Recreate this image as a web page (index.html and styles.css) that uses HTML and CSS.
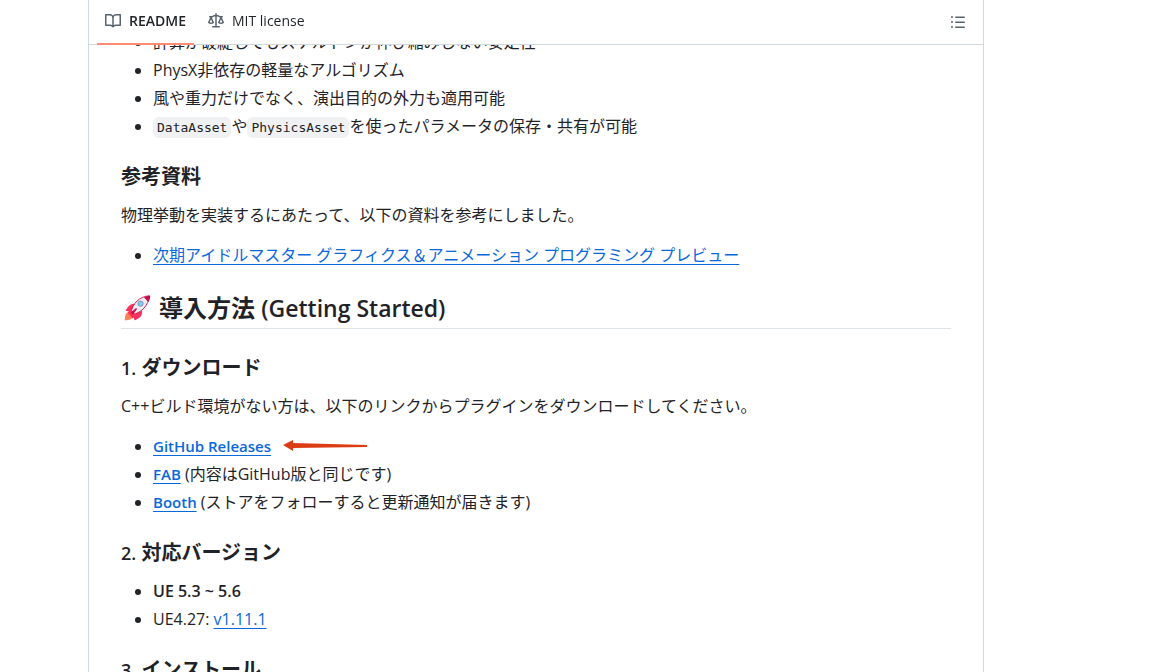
FILE: index.html
```html
<!DOCTYPE html>
<html lang="ja">
<head>
<meta charset="utf-8">
<meta name="viewport" content="width=device-width, initial-scale=1">
<title>README</title>
<link rel="stylesheet" href="styles.css">
</head>
<body>
<main class="panel">
  <header class="panel-bar">
    <nav class="tabs">
      <a class="tab tab-active" href="#readme">
        <svg class="icon" viewBox="0 0 16 16" aria-hidden="true"><path d="M0 1.75A.75.75 0 0 1 .75 1h4.253c1.227 0 2.317.59 3 1.501A3.743 3.743 0 0 1 11.006 1h4.245a.75.75 0 0 1 .75.75v10.5a.75.75 0 0 1-.75.75h-4.507a2.25 2.25 0 0 0-1.591.659l-.622.621a.75.75 0 0 1-1.06 0l-.622-.621A2.25 2.25 0 0 0 5.258 13H.75a.75.75 0 0 1-.75-.75Zm7.251 10.324.004-5.073-.002-2.253A2.25 2.25 0 0 0 5.003 2.5H1.5v9h3.757a3.75 3.75 0 0 1 1.994.574ZM8.755 4.75l-.004 7.322a3.752 3.752 0 0 1 1.992-.572H14.5v-9h-3.495a2.25 2.25 0 0 0-2.25 2.25Z"/></svg>
        <span>README</span>
      </a>
      <a class="tab" href="#license">
        <svg class="icon" viewBox="0 0 16 16" aria-hidden="true"><path d="M8.75.75V2h.985c.304 0 .603.08.867.231l1.29.736c.038.022.08.033.124.033h2.234a.75.75 0 0 1 0 1.5h-.427l2.111 4.692a.75.75 0 0 1-.154.838l-.53-.53.529.531-.001.002-.002.002-.006.006-.006.005-.01.01-.045.04c-.21.176-.441.327-.686.45C14.556 10.78 13.88 11 13 11a4.498 4.498 0 0 1-2.023-.454 3.544 3.544 0 0 1-.686-.45l-.045-.04-.016-.015-.006-.006-.004-.004v-.001a.75.75 0 0 1-.154-.838L12.178 4.5h-.162c-.305 0-.604-.079-.868-.231l-1.29-.736a.245.245 0 0 0-.124-.033H8.75V13h2.5a.75.75 0 0 1 0 1.5h-6.5a.75.75 0 0 1 0-1.5h2.5V3.5h-.984a.245.245 0 0 0-.124.033l-1.289.737c-.265.15-.564.23-.869.23h-.162l2.112 4.692a.75.75 0 0 1-.154.838l-.53-.53.529.531-.001.002-.002.002-.006.006-.016.015-.045.04c-.21.176-.441.327-.686.45C4.556 10.78 3.88 11 3 11a4.498 4.498 0 0 1-2.023-.454 3.544 3.544 0 0 1-.686-.45l-.045-.04-.016-.015-.006-.006-.004-.004v-.001a.75.75 0 0 1-.154-.838L2.178 4.5H1.75a.75.75 0 0 1 0-1.5h2.234a.249.249 0 0 0 .125-.033l1.288-.737c.265-.15.564-.23.869-.23h.984V.75a.75.75 0 0 1 1.5 0Zm2.945 8.477c.285.135.718.273 1.305.273s1.02-.138 1.305-.273L13 6.327Zm-10 0c.285.135.718.273 1.305.273s1.02-.138 1.305-.273L3 6.327Z"/></svg>
        <span>MIT license</span>
      </a>
    </nav>
    <button class="outline-button" type="button" aria-label="Outline">
      <svg class="icon" viewBox="0 0 16 16" aria-hidden="true"><path d="M5.75 2.5h8.5a.75.75 0 0 1 0 1.5h-8.5a.75.75 0 0 1 0-1.5Zm0 5h8.5a.75.75 0 0 1 0 1.5h-8.5a.75.75 0 0 1 0-1.5Zm0 5h8.5a.75.75 0 0 1 0 1.5h-8.5a.75.75 0 0 1 0-1.5ZM2 14a1 1 0 1 1 0-2 1 1 0 0 1 0 2Zm1-6a1 1 0 1 1-2 0 1 1 0 0 1 2 0ZM2 4a1 1 0 1 1 0-2 1 1 0 0 1 0 2Z"/></svg>
    </button>
  </header>
  <article class="markdown" id="readme">
    <ul>
      <li>計算が破綻してもスケルトンが伸び縮みしない安定性</li>
      <li>PhysX非依存の軽量なアルゴリズム</li>
      <li>風や重力だけでなく、演出目的の外力も適用可能</li>
      <li><code>DataAsset</code>や<code>PhysicsAsset</code>を使ったパラメータの保存・共有が可能</li>
    </ul>
    <h3>参考資料</h3>
    <p>物理挙動を実装するにあたって、以下の資料を参考にしました。</p>
    <ul>
      <li><a href="#slides">次期アイドルマスター グラフィクス＆アニメーション プログラミング プレビュー</a></li>
    </ul>
    <h2>
      <svg class="rocket" viewBox="0 0 32 32" aria-hidden="true">
        <path fill="#ff8257" d="M2 30c0-5 1-9 4-9l5 5c0 3-4 4-9 4Z"/>
        <path fill="#f8315c" d="M3 19c3-6 6-8 11-8L11 18l3 4 8-3c0 6-3 9-9 11l-1-5-5-5Z"/>
        <path fill="#eeedf2" stroke="#ca0b4a" d="M9 22C11 10 19 3 30 2c-1 11-8 19-20 22Z"/>
        <path fill="#ca0b4a" d="M24 4c3-2 5-2 7-2 0 2 0 4-2 7Z"/>
        <circle cx="20" cy="11" r="3" fill="#83cbff" stroke="#7b8a9c"/>
        <path fill="#f8315c" d="m5 21 4-3 6 6-4 4Z"/>
        <path fill="#ca0b4a" d="m9 21 6-5 1 1-5 7Z"/>
      </svg>
      <span>導入方法 <span class="latin">(Getting Started)</span></span>
    </h2>
    <h3><span class="latin">1.</span> ダウンロード</h3>
    <p>C++ビルド環境がない方は、以下のリンクからプラグインをダウンロードしてください。</p>
    <ul>
      <li><a class="strong" href="#releases">GitHub Releases</a>
        <svg class="arrow" viewBox="0 0 86 12" aria-hidden="true"><path fill="#dc3c14" d="M0 5 10 0v3l74 2v2L10 8v3Z"/></svg>
      </li>
      <li><a class="strong" href="#fab">FAB</a> (内容はGitHub版と同じです)</li>
      <li><a class="strong" href="#booth">Booth</a> (ストアをフォローすると更新通知が届きます)</li>
    </ul>
    <h3><span class="latin">2.</span> 対応バージョン</h3>
    <ul>
      <li><strong>UE 5.3 ~ 5.6</strong></li>
      <li>UE4.27: <a href="#v1111">v1.11.1</a></li>
    </ul>
    <h3><span class="latin">3.</span> インストール</h3>
  </article>
</main>
</body>
</html>
```
FILE: styles.css
```css
* {
  box-sizing: border-box;
}

body {
  margin: 0;
  height: 100vh;
  overflow: hidden;
  background: #fff;
  color: #1f2328;
  font-family: "Open Sans", "Noto Sans CJK JP", sans-serif;
  font-size: 16px;
  line-height: 24px;
}

.panel {
  height: 100vh;
  margin: 0 184px 0 88px;
  border: solid #d1d9e0;
  border-width: 0 1px;
  overflow: hidden;
}

.panel-bar {
  position: sticky;
  top: 0;
  z-index: 1;
  display: flex;
  align-items: center;
  justify-content: space-between;
  height: 45px;
  padding: 0 9px 0 8px;
  border-bottom: 1px solid #d1d9e0;
  background: #fff;
}

.tabs {
  display: flex;
  gap: 6px;
  height: 45px;
}

.tab {
  display: flex;
  align-items: center;
  gap: 8px;
  height: 45px;
  padding: 0 8px;
  border-bottom: 2px solid transparent;
  color: #1f2328;
  font-size: 14px;
  text-decoration: none;
}

.tab-active {
  border-color: #fd8c73;
  font-weight: 600;
}

.icon {
  display: block;
  width: 16px;
  height: 16px;
  fill: #59636e;
}

.outline-button {
  padding: 8px;
  border: 0;
  background: none;
}

.markdown {
  margin-top: -15px;
  padding: 0 32px;
}

.markdown ul {
  margin: 0 0 16px;
  padding-left: 32px;
}

.markdown li + li {
  margin-top: 4px;
}

.markdown p {
  margin: 0 0 16px;
}

.markdown h2,
.markdown h3 {
  margin: 24px 0 12px;
  font-weight: 700;
}

.markdown h2 {
  display: flex;
  gap: 8px;
  margin-bottom: 16px;
  padding: 0 0 3px 2px;
  border-bottom: 1px solid #d1d9e0b3;
  font-size: 24px;
  line-height: 34px;
}

.markdown h3 {
  font-size: 20px;
  line-height: 29px;
}

.markdown .latin,
.markdown strong,
.markdown .strong {
  font-weight: 600;
  line-height: 1;
}

.markdown h2 .latin {
  font-size: 23px;
}

.markdown h3 .latin {
  font-size: 18px;
}

.markdown .strong {
  font-size: 15px;
}

.markdown a {
  color: #0969da;
  text-decoration: underline;
  text-underline-offset: 3px;
}

.markdown code {
  padding: 3px 4px;
  border-radius: 6px;
  background: #818b981f;
  font-family: "DejaVu Sans Mono", monospace;
  font-size: 13px;
  line-height: 16px;
}

.rocket {
  width: 28px;
  height: 34px;
}

.arrow {
  width: 86px;
  height: 12px;
  margin-left: 8px;
}
```
